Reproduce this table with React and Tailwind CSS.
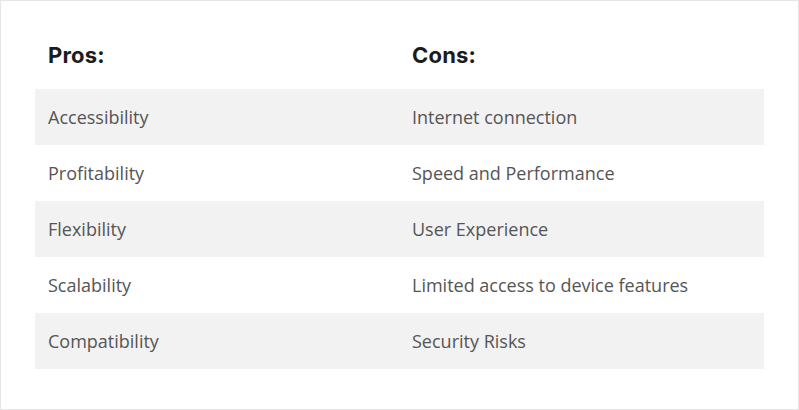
const rows = [
  ['Accessibility', 'Internet connection'],
  ['Profitability', 'Speed and Performance'],
  ['Flexibility', 'User Experience'],
  ['Scalability', 'Limited access to device features'],
  ['Compatibility', 'Security Risks'],
];

export default function App() {
  return (
    <div className="w-[799px] h-[410px] border border-[#e6e6e6] bg-white px-[34px] pt-[43px]">
      {/* Headings */}
      <div className="grid grid-cols-[364px_1fr] mb-[23px] font-['Inter',sans-serif] font-bold text-[22px] leading-[22px] tracking-[0.2px] text-[#1c1c1c]">
        <div className="pl-[13px]">Pros:</div>
        <div className="pl-[13px]">Cons:</div>
      </div>

      {/* Rows */}
      <div className="font-['Open_Sans',sans-serif] text-[18px] text-[#555555]">
        {rows.map(([pro, con], i) => (
          <div
            key={pro}
            className={`grid grid-cols-[364px_1fr] h-[56px] items-center ${i % 2 === 0 ? 'bg-[#f2f2f2]' : 'bg-white'}`}
          >
            <div className="pl-[13px]">{pro}</div>
            <div className="pl-[13px]">{con}</div>
          </div>
        ))}
      </div>
    </div>
  );
}
